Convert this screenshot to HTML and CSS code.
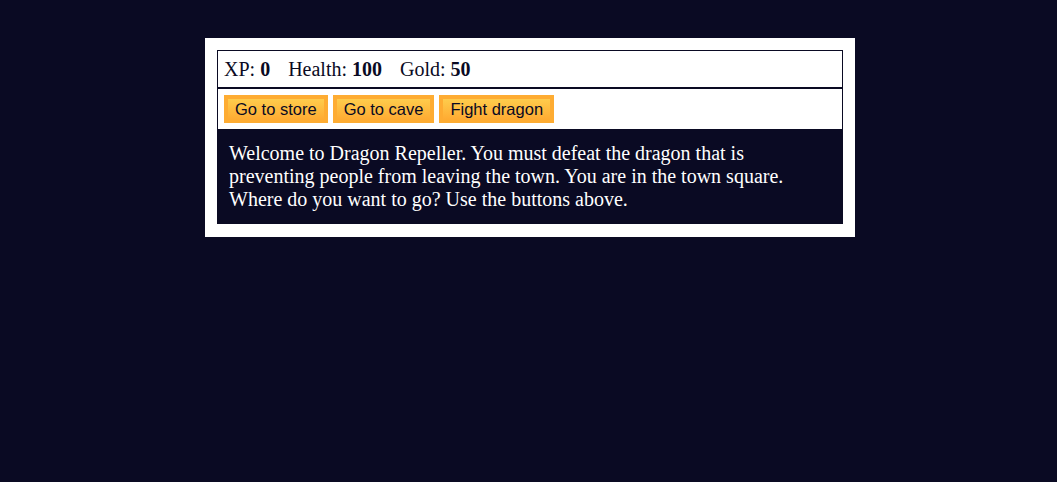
FILE: index.html
```html
<!DOCTYPE html>
<html lang="en">
<head>
<meta charset="utf-8">
<title>RPG - Dragon Repeller</title>
<link rel="stylesheet" href="styles.css">
</head>
<body>
  <div class="game">
    <div class="stats">
      <span class="stat">XP: <strong>0</strong></span>
      <span class="stat">Health: <strong>100</strong></span>
      <span class="stat">Gold: <strong>50</strong></span>
    </div>
    <div class="controls">
      <button class="btn">Go to store</button>
      <button class="btn">Go to cave</button>
      <button class="btn">Fight dragon</button>
    </div>
    <div class="text">
      Welcome to Dragon Repeller. You must defeat the dragon that is preventing people from leaving the town. You are in the town square. Where do you want to go? Use the buttons above.
    </div>
  </div>
</body>
</html>
```
FILE: styles.css
```css
body {
  margin: 8px;
  padding-left: 3px;
  background-color: #0a0a23;
  font-family: "Liberation Serif", "Times New Roman", serif;
  font-size: 20px;
}
.game {
  width: 626px;
  margin: 30px auto 0;
  padding: 12px 12px 13px;
  background-color: #ffffff;
  color: #ffffff;
}
.stats {
  border: 1px solid #0a0a23;
  padding: 7px 6px 6px;
  color: #0a0a23;
  line-height: 23px;
}
.stat {
  padding-right: 13px;
}
.controls {
  display: flex;
  gap: 5px;
  border: 1px solid #0a0a23;
  padding: 6px;
  color: #0a0a23;
}
.btn {
  height: 28px;
  padding: 0 7px;
  font-family: "Liberation Sans", Arial, sans-serif;
  font-size: 16.5px;
  cursor: pointer;
  color: #0a0a23;
  background-color: #feac32;
  background-image: linear-gradient(#fecc4c, #ffac33);
  border: 4px solid #feac32;
}
.text {
  background-color: #0a0a23;
  color: #ffffff;
  padding: 12px 12px 13px;
  line-height: 23px;
}
```
